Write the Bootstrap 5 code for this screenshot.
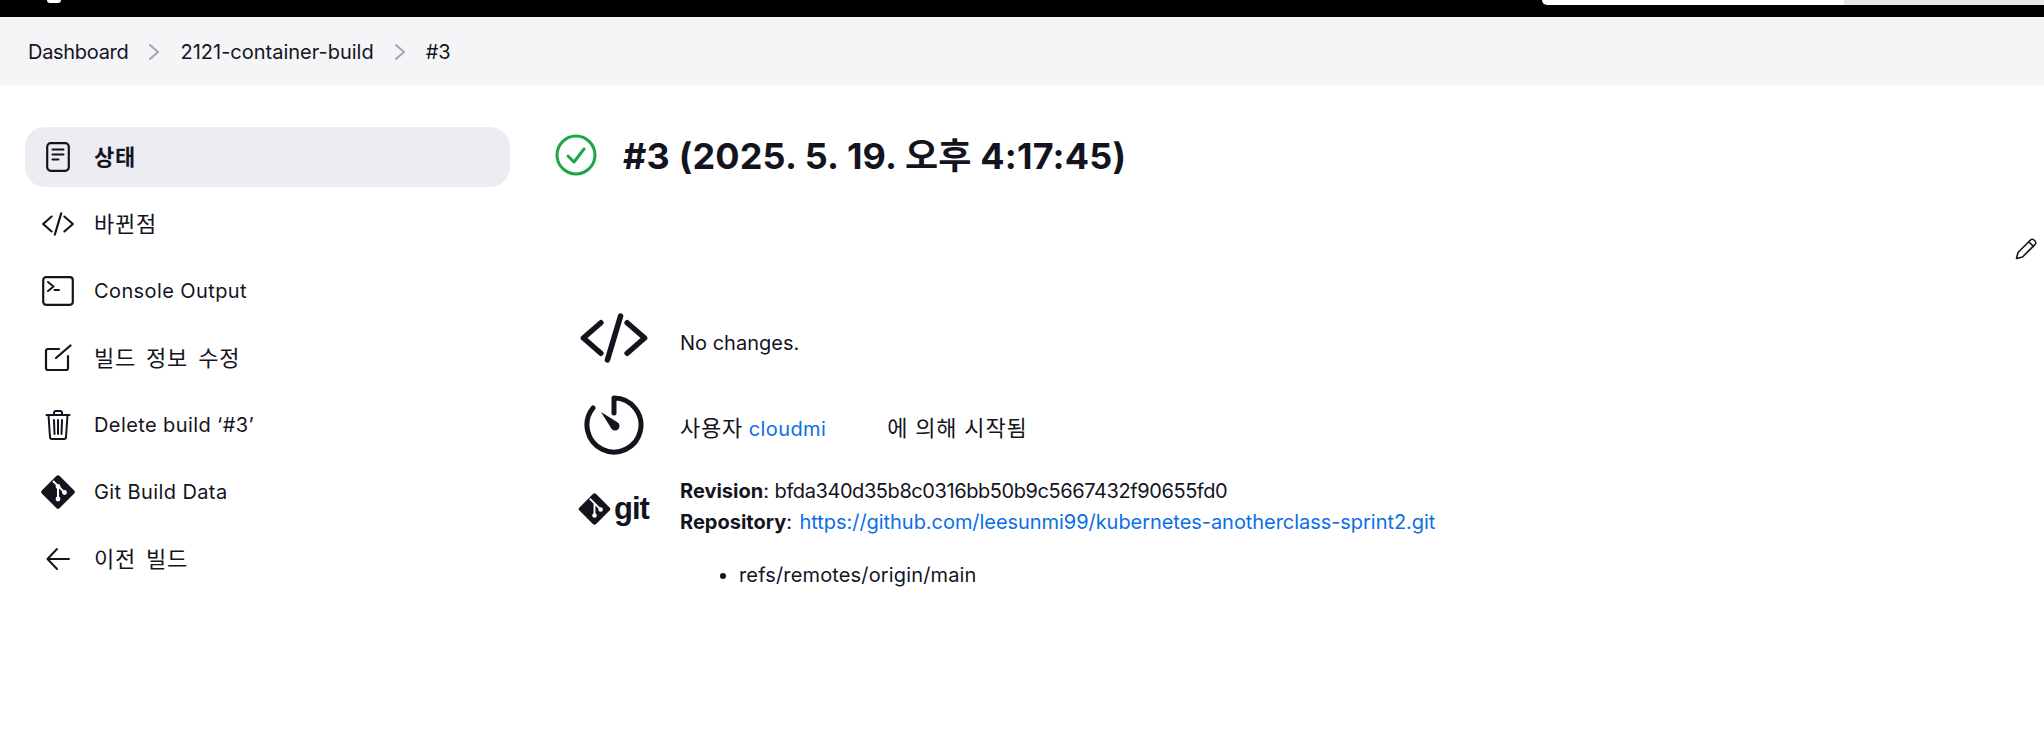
<!DOCTYPE html>
<html lang="ko">
<head>
    <meta charset="UTF-8">
    <title>#3 - 2121-container-build</title>
    <link href="https://cdn.jsdelivr.net/npm/bootstrap@5.3.0/dist/css/bootstrap.min.css" rel="stylesheet">
    <style>
        html, body { height: 100%; }
        body {
            font-family: Inter, "Noto Sans CJK KR", sans-serif;
            font-size: 20px;
            line-height: 30px;
            color: #14141f;
            background: #fff;
            overflow: hidden;
        }
        a { text-decoration: none; }
        svg { display: block; flex: none; }
        .ln { fill: none; stroke: currentColor; stroke-linecap: round; stroke-linejoin: round; }
        .ko { font-size: 22px; word-spacing: 3px; letter-spacing: .8px; }
        .top-strip { height: 17px; background: #000; }
        .top-logo { width: 14px; height: 3px; margin-left: 47px; background: #fff; border-radius: 0 0 5px 5px; }
        .top-tab { width: 302px; height: 5px; background: #fff; border-radius: 0 0 0 6px; margin-left: auto; }
        .top-rest { width: 200px; height: 5px; background: #e4e8e8; }
        .crumbs { height: 68px; padding: 2px 0 0 28px; background: #f5f5f8; }
        .crumbs a { color: #14141f; }
        .crumb-first { letter-spacing: -.3px; }
        .crumb-sep { color: #a3a3b2; margin: 0 20px; }
        .side { width: 485px; margin: 42px 0 0 25px; flex: none; }
        .side-item { height: 60px; padding-left: 17px; color: #14141f; border-radius: 20px; margin-bottom: 7px; letter-spacing: .4px; }
        .side-item.active { background: #ecedf2; font-weight: 700; }
        .side-ico { width: 32px; margin-right: 20px; }
        .build-main { margin: 42px 0 0 45px; }
        .build-title { font-size: 36px; font-weight: 700; line-height: 54px; padding-top: 2px; margin: 0; letter-spacing: .18px; }
        .status-ico { color: #1ea64b; margin-right: 26px; }
        .edit-row { height: 22px; margin: 55px 0 43px; padding-right: 7px; }
        .info-row { margin-left: 23px; }
        .info-row-timer { margin-top: 22px; }
        .info-row-git { margin-top: 21px; }
        .info-ico { width: 72px; margin-right: 30px; }
        .info-ico-git { margin-top: 17px; }
        .info-text { padding-top: 7px; }
        .info-text-changes { padding-top: 10px; }
        .git-word { font-family: "Liberation Sans", sans-serif; font-weight: 700; font-size: 31px; letter-spacing: -1px; line-height: 30px; margin-left: 3px; }
        .build-link { color: #0b6ee8; }
        .user-link { letter-spacing: .4px; }
        .build-user-rest { margin-left: 61px; word-spacing: 0; }
        .hash-text { letter-spacing: -.42px; }
        .repo-line { margin-top: 1px; }
        .repo-link { margin-left: 2px; letter-spacing: -.05px; }
        .ref-list { margin: 23px 0 0; padding-left: 59px; letter-spacing: .15px; }
    </style>
</head>
<body>
    <div class="top-strip d-flex align-items-start">
        <div class="top-logo"></div>
        <div class="top-tab"></div>
        <div class="top-rest"></div>
    </div>

    <nav class="crumbs d-flex align-items-center">
        <a class="crumb-first" href="#">Dashboard</a>
        <svg class="crumb-sep" width="12" height="18" viewBox="0 0 12 18"><path class="ln" stroke-width="2" d="M2 2l8 7-8 7"/></svg>
        <a href="#">2121-container-build</a>
        <svg class="crumb-sep" width="12" height="18" viewBox="0 0 12 18"><path class="ln" stroke-width="2" d="M2 2l8 7-8 7"/></svg>
        <a href="#">#3</a>
    </nav>

    <div class="d-flex">
        <div class="side">
            <a href="#" class="side-item active d-flex align-items-center">
                <span class="side-ico d-flex justify-content-center">
                    <svg width="24" height="30" viewBox="0 0 24 30"><rect class="ln" x="1.2" y="1.2" width="21.6" height="27.6" rx="3.5" stroke-width="2.2"/><path class="ln" stroke-width="2" d="M6.5 7.5h11M6.5 12.5h11M6.5 17.5h6"/></svg>
                </span>
                <span class="ko">상태</span>
            </a>
            <a href="#" class="side-item d-flex align-items-center">
                <span class="side-ico d-flex justify-content-center">
                    <svg width="34" height="34" viewBox="0 0 512 512"><path class="ln" stroke-width="32" d="M160 368L32 256l128-112M352 368l128-112-128-112M304 96l-96 320"/></svg>
                </span>
                <span class="ko">바뀐점</span>
            </a>
            <a href="#" class="side-item d-flex align-items-center">
                <span class="side-ico d-flex justify-content-center">
                    <svg width="32" height="30" viewBox="0 0 32 30"><rect class="ln" x="1.2" y="1.2" width="29.6" height="27.6" rx="3" stroke-width="2.2"/><path class="ln" stroke-width="2" d="M6 6l5.500 4.500L6 15M12.500 14h4.500"/></svg>
                </span>
                <span>Console Output</span>
            </a>
            <a href="#" class="side-item d-flex align-items-center">
                <span class="side-ico d-flex justify-content-center">
                    <svg width="28" height="28" viewBox="0 0 28 28"><path class="ln" stroke-width="2.200" d="M15 5H4a2 2 0 0 0-2 2v17a2 2 0 0 0 2 2h18a2 2 0 0 0 2-2V12M12 14L26.500 1.500"/></svg>
                </span>
                <span class="ko">빌드 정보 수정</span>
            </a>
            <a href="#" class="side-item d-flex align-items-center">
                <span class="side-ico d-flex justify-content-center">
                    <svg width="26" height="30" viewBox="0 0 26 30"><path class="ln" stroke-width="2" d="M1.500 5h23M3.500 5l1.500 22a2 2 0 0 0 2 2h12a2 2 0 0 0 2-2l1.500-22M9 5V3a2 2 0 0 1 2-2h4a2 2 0 0 1 2 2v2M9 10l.5 14M13 10v14M17 10l-.5 14"/></svg>
                </span>
                <span>Delete build ‘#3’</span>
            </a>
            <a href="#" class="side-item d-flex align-items-center">
                <span class="side-ico d-flex justify-content-center">
                    <svg width="34" height="34" viewBox="0 0 34 34"><path fill="currentColor" d="M15.300 1L1 15.300a2.400 2.400 0 0 0 0 3.400L15.300 33a2.400 2.400 0 0 0 3.400 0L33 18.700a2.400 2.400 0 0 0 0-3.400L18.700 1a2.400 2.400 0 0 0-3.400 0z"/><path fill="none" stroke="#fff" stroke-width="2" d="M12 6l12 12M17 11v13"/><circle cx="17" cy="11.500" r="2.400" fill="#fff"/><circle cx="17" cy="24" r="2.400" fill="#fff"/><circle cx="23.500" cy="17.500" r="2.400" fill="#fff"/></svg>
                </span>
                <span>Git Build Data</span>
            </a>
            <a href="#" class="side-item d-flex align-items-center">
                <span class="side-ico d-flex justify-content-center">
                    <svg width="24" height="24" viewBox="0 0 24 24"><path class="ln" stroke-width="2" d="M11 2L1.500 12 11 22M2 12h21"/></svg>
                </span>
                <span class="ko">이전 빌드</span>
            </a>
        </div>

        <main class="build-main flex-grow-1">
            <div class="d-flex align-items-center">
                <svg class="status-ico" width="42" height="42" viewBox="0 0 42 42"><circle class="ln" cx="21" cy="21" r="19" stroke-width="3"/><path class="ln" stroke-width="3" d="M13 22l6 6 10-13"/></svg>
                <h1 class="build-title">#3 (2025. 5. 19. 오후 4:17:45)</h1>
            </div>

            <div class="edit-row d-flex justify-content-end">
                <svg width="22" height="22" viewBox="0 0 22 22"><path class="ln" stroke-width="1.600" d="M1.500 20.500l1.500-6L15.500 2a2.400 2.400 0 0 1 3.500 0l1 1a2.400 2.400 0 0 1 0 3.500L7.500 19zM14 4l4.500 4.500"/></svg>
            </div>

            <div class="info-row d-flex align-items-center">
                <div class="info-ico d-flex justify-content-center">
                    <svg width="70" height="70" viewBox="0 0 512 512"><path class="ln" stroke-width="40" d="M160 368L32 256l128-112M352 368l128-112-128-112M304 96l-96 320"/></svg>
                </div>
                <div class="info-text-changes">No changes.</div>
            </div>

            <div class="info-row info-row-timer d-flex align-items-center">
                <div class="info-ico d-flex justify-content-center">
                    <svg width="60" height="60" viewBox="0 0 60 60"><path class="ln" stroke-width="5" d="M30 18V3a27 27 0 1 1-21 10"/><path fill="currentColor" d="M17 17l16 10a4.500 4.500 0 1 1-6 6z"/></svg>
                </div>
                <div class="info-text"><span class="ko">사용자</span> <a class="build-link user-link" href="#">cloudmi</a><span class="ko build-user-rest">에 의해 시작됨</span></div>
            </div>

            <div class="info-row info-row-git d-flex align-items-start">
                <div class="info-ico info-ico-git d-flex align-items-center">
                    <svg width="33" height="32" viewBox="0 0 34 34"><path fill="currentColor" d="M15.300 1L1 15.300a2.400 2.400 0 0 0 0 3.400L15.300 33a2.400 2.400 0 0 0 3.400 0L33 18.700a2.400 2.400 0 0 0 0-3.400L18.700 1a2.400 2.400 0 0 0-3.400 0z"/><path fill="none" stroke="#fff" stroke-width="2" d="M12 6l12 12M17 11v13"/><circle cx="17" cy="24" r="2.400" fill="#fff"/><circle cx="23.500" cy="17.500" r="2.400" fill="#fff"/></svg>
                    <span class="git-word">git</span>
                </div>
                <div>
                    <div><strong>Revision</strong>: <span class="hash-text">bfda340d35b8c0316bb50b9c5667432f90655fd0</span></div>
                    <div class="repo-line"><strong>Repository</strong>: <a class="build-link repo-link" href="#">https://github.com/leesunmi99/kubernetes-anotherclass-sprint2.git</a></div>
                    <ul class="ref-list"><li>refs/remotes/origin/main</li></ul>
                </div>
            </div>
        </main>
    </div>

    <script src="https://cdn.jsdelivr.net/npm/bootstrap@5.3.0/dist/js/bootstrap.bundle.min.js"></script>
</body>
</html>
